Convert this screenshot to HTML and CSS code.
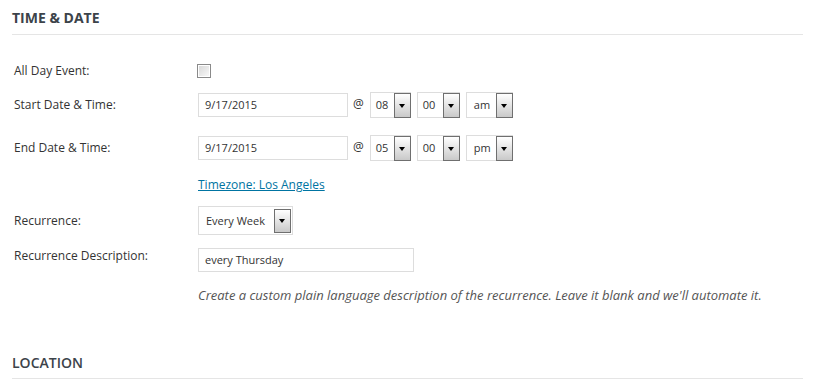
FILE: index.html
```html
<!DOCTYPE html>
<html>

<head>
  <title>Time &amp; Date</title>
  <link rel="stylesheet" href="styles.css">
</head>

<body>
  <div class="panel">
    <h3 class="panel-title">Time &amp; Date</h3>

    <div class="fields">
      <div class="field field-allday">
        <label class="field-label">All Day Event:</label>
        <div class="field-body">
          <span class="checkbox"></span>
        </div>
      </div>

      <div class="field field-start">
        <label class="field-label">Start Date &amp; Time:</label>
        <div class="field-body">
          <span class="text-input date-input">9/17/2015</span>
          <span class="at">@</span>
          <span class="dropdown dd-hour"><span class="dd-value">08</span><span class="dd-button"></span></span>
          <span class="dropdown dd-minute"><span class="dd-value">00</span><span class="dd-button"></span></span>
          <span class="dropdown dd-meridian"><span class="dd-value">am</span><span class="dd-button"></span></span>
        </div>
      </div>

      <div class="field field-end">
        <label class="field-label">End Date &amp; Time:</label>
        <div class="field-body">
          <span class="text-input date-input">9/17/2015</span>
          <span class="at">@</span>
          <span class="dropdown dd-hour"><span class="dd-value">05</span><span class="dd-button"></span></span>
          <span class="dropdown dd-minute"><span class="dd-value">00</span><span class="dd-button"></span></span>
          <span class="dropdown dd-meridian"><span class="dd-value">pm</span><span class="dd-button"></span></span>
        </div>
      </div>

      <div class="field field-timezone">
        <span class="field-label"></span>
        <div class="field-body">
          <a class="timezone-link" href="#">Timezone: Los Angeles</a>
        </div>
      </div>

      <div class="field field-recurrence">
        <label class="field-label">Recurrence:</label>
        <div class="field-body">
          <span class="dropdown dd-recurrence"><span class="dd-value">Every Week</span><span class="dd-button"></span></span>
        </div>
      </div>

      <div class="field field-description">
        <label class="field-label">Recurrence Description:</label>
        <div class="field-body">
          <span class="text-input description-input">every Thursday</span>
        </div>
      </div>

      <div class="field field-help">
        <span class="field-label"></span>
        <div class="field-body">
          <p class="help">Create a custom plain language description of the recurrence. Leave it blank and we'll automate it.</p>
        </div>
      </div>
    </div>
  </div>

  <div class="panel panel-location">
    <h3 class="panel-title">Location</h3>
  </div>
</body>

</html>
```

FILE: styles.css
```css
/* reset */
* {
  margin: 0;
  padding: 0;
  box-sizing: border-box;
}

body {
  background: #fff;
  color: #333;
  font-family: "Open Sans", "Liberation Sans", sans-serif;
  font-size: 12px;
}

.panel {
  padding: 0 20px 0 12px;
}

.panel-title {
  height: 35px;
  padding-top: 8px;
  border-bottom: 1px solid #e5e5e5;
  color: #3c434a;
  font-size: 14px;
  font-weight: 700;
  line-height: 20px;
  text-transform: uppercase;
}

.fields {
  padding: 23px 0 0 2px;
}

.field {
  display: flex;
  align-items: center;
}

.field-label {
  width: 184px;
  flex-shrink: 0;
  line-height: 16px;
}

.field-body {
  display: flex;
  align-items: center;
}

.field-allday {
  height: 26px;
}

.field-start {
  height: 26px;
  margin-top: 8px;
}

.field-end {
  height: 26px;
  margin-top: 17px;
}

.field-timezone {
  height: 18px;
  margin-top: 15px;
}

.field-recurrence {
  height: 29px;
  margin-top: 12px;
}

.field-description {
  align-items: flex-start;
  height: 24px;
  margin-top: 13px;
}

.field-help {
  height: 18px;
  margin-top: 14px;
}

/* checkbox */
.checkbox {
  display: block;
  width: 14px;
  height: 14px;
  margin-left: -1px;
  border: 1px solid #8a8a8a;
  box-shadow: inset 0 0 0 1px #fff;
  background: linear-gradient(135deg, #d6d6d6, #fbfbfb);
}

/* text inputs */
.text-input {
  display: block;
  height: 24px;
  padding: 0 6px;
  border: 1px solid #ddd;
  background: #fff;
  color: #333;
  font-size: 11px;
  line-height: 22px;
}

.date-input {
  width: 150px;
}

.description-input {
  width: 216px;
}

.at {
  margin: -4px 6px 0 5px;
}

/* dropdowns */
.dropdown {
  position: relative;
  display: block;
  height: 26px;
  margin-right: 6px;
  border: 1px solid #ddd;
  background: #fff;
  font-size: 11px;
  line-height: 24px;
}

.dd-value {
  display: block;
  padding-left: 5px;
}

.dd-button {
  position: absolute;
  top: 0;
  right: -1px;
  width: 17px;
  height: 25px;
  border: 1px solid #6f6f6f;
  background: linear-gradient(#fff, #c9c9c9);
}

.dd-button::after {
  content: "";
  position: absolute;
  left: 4px;
  top: 10px;
  border-left: 3.5px solid transparent;
  border-right: 3.5px solid transparent;
  border-top: 4px solid #000;
}

.dd-hour {
  width: 41px;
}

.dd-minute {
  width: 43px;
}

.dd-meridian {
  width: 47px;
}

.dd-meridian .dd-value {
  padding-left: 7px;
}

.dd-recurrence {
  width: 95px;
  height: 29px;
  line-height: 27px;
}

.dd-recurrence .dd-value {
  padding-left: 7px;
}

.dd-recurrence .dd-button {
  top: 2px;
  right: 1px;
  height: 24px;
}

.dd-recurrence .dd-button::after {
  top: 9px;
}

.timezone-link {
  color: #0074a2;
  line-height: 18px;
}

.help {
  color: #555;
  font-size: 13px;
  font-style: italic;
  line-height: 18px;
}

.panel-location {
  margin-top: 40px;
}

.panel-location .panel-title {
  padding-top: 9px;
  height: 35px;
  font-weight: 600;
}
```
